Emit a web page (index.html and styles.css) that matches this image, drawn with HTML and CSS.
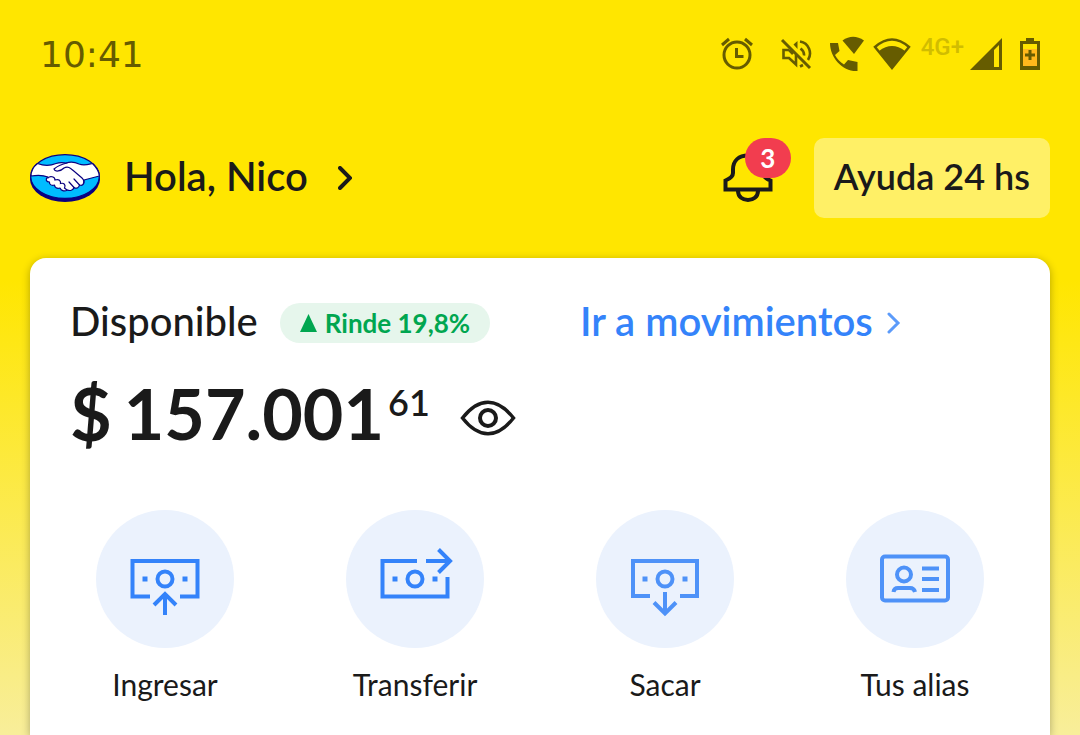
FILE: index.html
```html
<!DOCTYPE html>
<html lang="es">
<head>
    <meta charset="UTF-8">
    <meta name="viewport" content="width=device-width, initial-scale=1.0">
    <title>Inicio</title>
    <link rel="stylesheet" href="styles.css">
</head>
<body>
    <div class="status">
        <time class="clock">10:41</time>
        <div class="status-icons">
            <!-- alarm -->
            <svg class="alarm" width="34" height="34" viewBox="0 0 34 34" fill="none" stroke="currentColor" stroke-width="3">
                <circle cx="17" cy="18" r="13"/>
                <path d="M16.500 11v8.500h7M2 8l7-6M32 8l-7-6"/>
            </svg>
            <!-- muted -->
            <svg class="muted" width="32" height="32" viewBox="0 0 32 32" fill="none" stroke="currentColor" stroke-width="2.600">
                <path d="M2 2l28 28" stroke-width="3"/>
                <path d="M9 12H3.500v8H9l7 6.500V17M9 12l4 4"/>
                <path d="M13.500 6.500L17.500 3v8z" fill="currentColor" stroke="none"/>
                <path d="M20 3.500C29 5 32.500 15 28 22M20.500 10.500q4 3 3.500 7M23 27l-3 1.500"/>
            </svg>
            <!-- wifi call -->
            <svg class="call" width="34" height="36" viewBox="0 0 34 36" fill="currentColor">
                <path d="M0 7h8l1.500 8-4.500 4c2 4 5 7 9 9.500l4-4.500 9.500 2v9C13 36 0 22 0 7z"/>
                <path d="M12.500 4.500Q23-3 34 4.500L24 18z"/>
            </svg>
            <!-- wifi -->
            <svg class="wifi" width="38" height="32" viewBox="0 0 38 32">
                <path d="M2 9q17-15 34 0L19 30z" fill="none" stroke="currentColor" stroke-width="2.500"/>
                <path d="M6 13q13-10 26 0L19 30z" fill="currentColor"/>
            </svg>
            <span class="network">4G+</span>
            <!-- signal -->
            <svg class="signal" width="32" height="32" viewBox="0 0 32 32">
                <path d="M0 32L32 0v32z" fill="currentColor"/>
                <path d="M24 12l5-5v22h-5z" fill="#ffe600"/>
            </svg>
            <!-- battery -->
            <svg class="battery" width="20" height="32" viewBox="0 0 20 32">
                <path d="M6 0h8v3h6v29H0V3h6z" fill="currentColor"/>
                <path d="M3 6h14v5H3z" fill="#ffe600"/>
                <path d="M3 11h14v17H3z" fill="#ffb81c"/>
                <path d="M10 12v10M5 17h10" stroke="currentColor" stroke-width="3"/>
            </svg>
        </div>
    </div>

    <header class="header">
        <a class="profile" href="#">
            <svg class="logo" width="70" height="48" viewBox="0 0 70 48">
                <ellipse cx="35" cy="25" rx="35" ry="23" fill="#0a0080"/>
                <ellipse cx="35" cy="22.500" rx="34.300" ry="21.800" fill="#00bcff" stroke="#0a0080" stroke-width="1.200"/>
                <path d="M7.500 9.500C14 12 20 12 26 9.500C31 8 34 9 36 9C42 7 45 8 49 10C54 12 58 10.500 62.500 9.500C66 13 69.300 17 69.300 22L54 26C54 31 52 32 49.500 31C49 34 46 35 44 33.500C43 36.500 40 37 37.500 36C34 38 31 36.500 30 34C27 35 24.500 33.500 24.500 31C21 32 19 30 19.500 28C16 28 15 25 18 23C13 21 7 21 1 22C1 17 3 13 7.500 9.500z" fill="#fff" stroke="#0a0080" stroke-width="1.200" stroke-linejoin="round"/>
                <path d="M37 9C32 10 29 11 24 15C25 18.500 31 17 34 14C39 11 42 16 45 18L52 24C54 26 54.500 28 53.500 30M49.500 31L44 25M44 33.500L39 28" fill="none" stroke="#0a0080" stroke-width="1.200" stroke-linecap="round"/>
                <path d="M18 24C20 21.500 25 22.500 25 26C29 24.500 31 27 30.500 29.500C34 28.500 36 31 34.500 34L37 36" fill="none" stroke="#0a0080" stroke-width="1.200" stroke-linecap="round"/>
            </svg>
            <span class="hello">Hola, Nico</span>
            <svg width="14" height="24" viewBox="0 0 14 24" fill="none" stroke="currentColor" stroke-width="4" stroke-linecap="round">
                <path d="M2 2l10 10L2 22"/>
            </svg>
        </a>
        <button class="bell" type="button" aria-label="Notificaciones">
            <svg width="50" height="50" viewBox="0 0 50 50" fill="none" stroke="currentColor" stroke-width="4">
                <path d="M2.500 36.500V27.500Q10 24.500 10 20V16.500C10 7.500 16 2.500 25 2.500S40 7.500 40 16.500V20Q40 24.500 47.500 27.500V36.500z"/>
                <path d="M15 38C15 50 35 50 35 38"/>
            </svg>
            <span class="badge">3</span>
        </button>
        <button class="help" type="button">Ayuda 24 hs</button>
    </header>

    <main class="card">
        <div class="top">
            <div class="available">
                <h1>Disponible</h1>
                <span class="yield">
                    <svg width="17" height="18" viewBox="0 0 17 18"><path d="M8.500 0L17 18H0z" fill="currentColor"/></svg>
                    Rinde 19,8%
                </span>
            </div>
            <a class="movements" href="#">
                <span>Ir a movimientos</span>
                <svg width="14" height="22" viewBox="0 0 14 22" fill="none" stroke="currentColor" stroke-width="3" stroke-linecap="round">
                    <path d="M2 2l9 9-9 9"/>
                </svg>
            </a>
        </div>
        <div class="balance">
            <span class="currency">$</span>
            <span class="amount">157.001</span>
            <span class="cents">61</span>
            <button class="eye" type="button" aria-label="Ocultar saldo">
                <svg width="56" height="36" viewBox="0 0 56 36" fill="none" stroke="currentColor" stroke-width="3.500">
                    <path d="M2.500 18C19-3 37-3 53.500 18C37 39 19 39 2.500 18z"/>
                    <circle cx="28" cy="18" r="8" stroke-width="4"/>
                </svg>
            </button>
        </div>
        <nav class="actions">
            <a href="#">
                <span class="circle">
                    <svg width="80" height="80" viewBox="0 0 80 80" fill="none" stroke="currentColor" stroke-width="4">
                        <path d="M25 57.500H7.500V22H72.500V57.500H55M40 76V55M29 66l11-11 11 11"/>
                        <circle cx="40" cy="40" r="7.500"/>
                        <path d="M17.500 40h5M57.500 40h5" stroke-width="5"/>
                    </svg>
                </span>
                Ingresar
            </a>
            <a href="#">
                <span class="circle">
                    <svg width="80" height="80" viewBox="0 0 80 80" fill="none" stroke="currentColor" stroke-width="4">
                        <path d="M42 22H7.500V57.500H72.500V38M51 22H75M63.500 10.500L75 22 63.500 33.500"/>
                        <circle cx="40" cy="40" r="7.500"/>
                        <path d="M17.500 40h5M57.500 40h5" stroke-width="5"/>
                    </svg>
                </span>
                Transferir
            </a>
            <a href="#">
                <span class="circle light">
                    <svg width="80" height="80" viewBox="0 0 80 80" fill="none" stroke="currentColor" stroke-width="4">
                        <path d="M25 57H8V22H72V57H55M40 53V74M29 63.500l11 11 11-11"/>
                        <circle cx="40" cy="40" r="7.500"/>
                        <path d="M17.500 40h5M57.500 40h5" stroke-width="5"/>
                    </svg>
                </span>
                Sacar
            </a>
            <a href="#">
                <span class="circle light">
                    <svg width="80" height="80" viewBox="0 0 80 80" fill="none" stroke="currentColor" stroke-width="4">
                        <rect x="7" y="17.500" width="66" height="44" rx="3"/>
                        <circle cx="29" cy="35.500" r="7"/>
                        <path d="M18.500 53Q19 49 23 49H35Q39 49 40 53M47 29.500h17M47 40h17M47 51h17"/>
                    </svg>
                </span>
                Tus alias
            </a>
        </nav>
    </main>
</body>
</html>
```
FILE: styles.css
```css
* {
    box-sizing: border-box;
}
body {
    margin: 0;
    min-height: 100vh;
    display: flex;
    flex-direction: column;
    background: linear-gradient(#ffe600 280px, #f8ee9a 100%);
    font-family: Lato, "Liberation Sans", sans-serif;
    color: #1a1a1a;
}
a {
    color: inherit;
    text-decoration: none;
}
button {
    border: 0;
    padding: 0;
    background: none;
    font: inherit;
    color: inherit;
    cursor: pointer;
}
svg {
    display: block;
    flex: none;
}

.status {
    display: flex;
    justify-content: space-between;
    align-items: center;
    height: 108px;
    padding: 0 40px;
    color: #665c00;
}
.clock {
    font-family: "DejaVu Sans", sans-serif;
    font-size: 36px;
}
.status-icons {
    display: flex;
    align-items: center;
}
.muted {
    margin-left: 26px;
}
.call {
    margin-left: 18px;
}
.wifi {
    margin-left: 9px;
}
.network {
    margin: 0 6px 14px 10px;
    font: 500 24px/28px Roboto, sans-serif;
    color: #d1bd00;
}
.battery {
    margin-left: 18px;
}

.header {
    display: flex;
    align-items: center;
    height: 80px;
    margin: 30px 30px 40px;
    font-weight: 600;
}
.profile {
    display: flex;
    align-items: center;
    margin-right: auto;
}
.hello {
    margin: 0 30px 0 24px;
    padding-bottom: 4px;
    font-size: 40px;
}
.bell {
    position: relative;
    margin-right: 41px;
}
.badge {
    position: absolute;
    top: -15px;
    left: 22px;
    width: 46px;
    height: 40px;
    border-radius: 20px;
    background: #f23d4f;
    color: #fff;
    font-size: 26px;
    font-weight: 700;
    line-height: 40px;
}
.help {
    height: 80px;
    padding: 0 20px 4px;
    border-radius: 10px;
    background: #fff066;
    font-size: 36px;
}

.card {
    flex: 1;
    margin: 0 30px;
    padding-bottom: 30px;
    border-radius: 16px 16px 0 0;
    background: #fff;
    box-shadow: 0 2px 8px rgba(0, 0, 0, 0.3);
}
.top {
    display: grid;
    grid-template-columns: 1fr 1fr;
    padding-top: 40px;
}
.available,
.movements {
    display: flex;
    align-items: center;
    padding-left: 40px;
    height: 50px;
    white-space: nowrap;
}
h1 {
    margin: 0 22px 0 0;
    padding-bottom: 4px;
    font-size: 40px;
    font-weight: 500;
}
.yield {
    display: flex;
    align-items: center;
    gap: 8px;
    height: 40px;
    padding: 0 20px;
    border-radius: 20px;
    background: #e6f6ec;
    color: #00a650;
    font-size: 26px;
    font-weight: 700;
}
.movements {
    gap: 14px;
    color: #3483fa;
    font-size: 40px;
    font-weight: 600;
}
.movements span {
    padding-bottom: 4px;
}
.movements svg {
    opacity: 0.8;
}
.balance {
    display: flex;
    align-items: flex-start;
    height: 90px;
    margin: 20px 0 52px;
    padding-left: 40px;
    line-height: 90px;
}
.currency,
.amount {
    font-size: 72px;
    font-weight: 700;
}
.currency {
    margin-right: 12px;
}
.amount {
    font-size: 70px;
}
.cents {
    margin-left: 4px;
    font-size: 36px;
    font-weight: 600;
    line-height: 68px;
}
.eye {
    align-self: center;
    margin-left: 30px;
    padding-top: 10px;
}

.actions {
    display: grid;
    grid-template-columns: repeat(4, 1fr);
    padding: 0 10px;
    font-size: 30px;
}
.actions a {
    display: flex;
    flex-direction: column;
    align-items: center;
    gap: 18px;
}
.circle {
    display: flex;
    align-items: center;
    justify-content: center;
    width: 138px;
    height: 138px;
    border-radius: 50%;
    background: #ebf2fd;
    color: #3483fa;
}
.circle.light {
    color: #4e92f8;
}
```
